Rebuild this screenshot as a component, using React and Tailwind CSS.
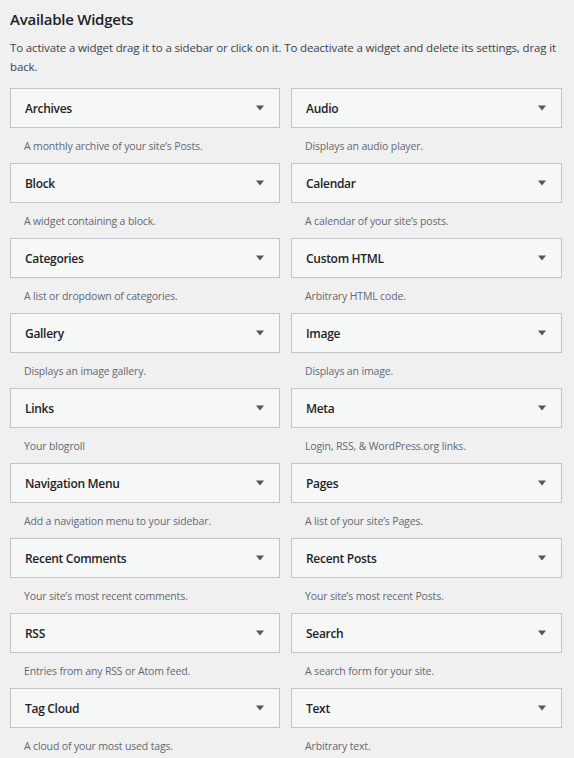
const widgets = [
  ["Archives", "A monthly archive of your site’s Posts."],
  ["Audio", "Displays an audio player."],
  ["Block", "A widget containing a block."],
  ["Calendar", "A calendar of your site’s posts."],
  ["Categories", "A list or dropdown of categories."],
  ["Custom HTML", "Arbitrary HTML code."],
  ["Gallery", "Displays an image gallery."],
  ["Image", "Displays an image."],
  ["Links", "Your blogroll"],
  ["Meta", "Login, RSS, & WordPress.org links."],
  ["Navigation Menu", "Add a navigation menu to your sidebar."],
  ["Pages", "A list of your site’s Pages."],
  ["Recent Comments", "Your site’s most recent comments."],
  ["Recent Posts", "Your site’s most recent Posts."],
  ["RSS", "Entries from any RSS or Atom feed."],
  ["Search", "A search form for your site."],
  ["Tag Cloud", "A cloud of your most used tags."],
  ["Text", "Arbitrary text."],
];

const Widget = ({ title, desc }) => (
  <div className="h-[75px]">
    <div className="h-[40px] border border-[#c3c4c7] bg-[#f6f7f7] flex items-center justify-between pl-[14px] pr-[14px]">
      <span className="text-[12px] tracking-[-0.3px] font-semibold text-[#1d2327] pt-px">{title}</span>
      <svg width="10" height="6" viewBox="0 0 10 6">
        <path d="M1 0.5 L9 0.5 L5 5.5 Z" fill="#50575e" />
      </svg>
    </div>
    <p className="pt-[9px] pl-[14px] text-[10.5px] tracking-[-0.15px] leading-[19px] text-[#646970]">{desc}</p>
  </div>
);

export default function App() {
  return (
    <div
      className="min-h-screen bg-[#f0f0f1] pl-[10px] pr-[12px] pt-[9px]"
      style={{ fontFamily: '"Open Sans", "Noto Sans", sans-serif' }}
    >
      <h3 className="text-[15px] tracking-[-0.25px] leading-[20px] font-semibold text-[#1d2327]">Available Widgets</h3>
      <p className="mt-[9px] text-[11.5px] tracking-[-0.15px] leading-[19px] text-[#3c434a]">
        To activate a widget drag it to a sidebar or click on it. To deactivate a widget and delete its settings, drag it back.
      </p>
      <div className="mt-[12px] grid grid-cols-[270px_271px] gap-x-[11px]">
        {widgets.map(([t, d]) => (
          <Widget key={t} title={t} desc={d} />
        ))}
      </div>
    </div>
  );
}
